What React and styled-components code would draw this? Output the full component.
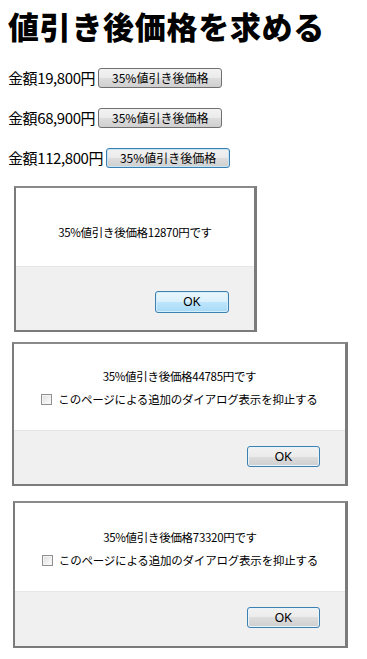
import React from 'react';
import styled, { createGlobalStyle, css } from 'styled-components';

const GlobalStyle = createGlobalStyle`
  html, body {
    margin: 0;
    padding: 0;
    background: #fff;
  }
  body {
    font-family: "Noto Sans CJK JP", "Noto Sans", sans-serif;
    color: #000;
  }
`;

const Page = styled.div`
  width: 367px;
  height: 659px;
  overflow: hidden;
  display: flex;
  flex-direction: column;
`;

const Title = styled.h1`
  margin: 8px 0 0 8px;
  font-family: "Noto Sans CJK JP", sans-serif;
  font-size: 31px;
  font-weight: 900;
  line-height: 36px;
  letter-spacing: 0.7px;
  height: 36px;
`;

const Rows = styled.div`
  display: flex;
  flex-direction: column;
  gap: 20px;
  margin: 24px 0 0 8px;
`;

const Row = styled.div`
  display: flex;
  align-items: center;
  height: 20px;
`;

const Amount = styled.span`
  font-size: 15px;
  letter-spacing: -0.4px;
  line-height: 20px;
  margin-right: 3px;
`;

const PageButton = styled.button`
  height: 20px;
  width: 124px;
  padding: 0;
  font-family: "Noto Sans CJK JP", sans-serif;
  font-size: 12px;
  line-height: 18px;
  color: #000;
  border: 1px solid #707070;
  border-radius: 3px;
  background: linear-gradient(#f2f2f2 0%, #ebebeb 50%, #dddddd 50%, #cfcfcf 100%);
  ${(p) => p.$focused && css`
    border-color: #3c7fb1;
    box-shadow: inset 0 0 0 1px #c4e5f6;
  `}
`;

const DialogList = styled.div`
  display: flex;
  flex-direction: column;
  margin-top: 18px;
`;

const Dialog = styled.div`
  box-sizing: border-box;
  width: ${(p) => p.$width}px;
  margin: ${(p) => p.$top}px 0 0 ${(p) => p.$left}px;
  border: 2px solid #7b7b7b;
  border-right-width: 3px;
  border-top-color: #8a8a8a;
  display: flex;
  flex-direction: column;
  background: #fff;
  font-family: "Noto Sans CJK JP", sans-serif;
`;

const Body = styled.div`
  height: ${(p) => p.$height}px;
  box-sizing: border-box;
  padding-top: ${(p) => p.$padTop}px;
  display: flex;
  flex-direction: column;
  align-items: center;
  gap: 9px;
  border-bottom: 1px solid #e6e6e6;
`;

const Message = styled.div`
  font-size: 11.5px;
  line-height: 14px;
  letter-spacing: -0.3px;
  color: #000;
`;

const CheckRow = styled.label`
  display: flex;
  align-items: center;
  gap: 6px;
  font-size: 11.5px;
  line-height: 14px;
  letter-spacing: -0.2px;
`;

const Box = styled.span`
  box-sizing: border-box;
  width: 11px;
  height: 11px;
  border: 1px solid #8e8f8f;
  background: linear-gradient(135deg, #dcdcdc 0%, #f4f4f4 70%, #fdfdfd 100%);
  box-shadow: inset 0 0 0 1px #f4f4f4;
`;

const Footer = styled.div`
  background: #f0f0f0;
  display: flex;
  justify-content: flex-end;
  padding: ${(p) => p.$padTop}px 25px ${(p) => p.$padBottom}px 0;
`;

const OkButton = styled.button`
  box-sizing: border-box;
  width: ${(p) => p.$w}px;
  height: ${(p) => p.$h}px;
  padding: 0;
  font-family: "Liberation Sans", sans-serif;
  font-size: 12px;
  color: #000;
  border: 1px solid #3c7fb1;
  border-radius: 3px;
  background: ${(p) => (p.$hover
    ? 'linear-gradient(#eaf6fd 0%, #d9f0fc 50%, #bee6fd 50%, #a7d9f5 100%)'
    : 'linear-gradient(#f2f2f2 0%, #ebebeb 50%, #dddddd 50%, #cfcfcf 100%)')};
  box-shadow: inset 0 0 0 1px ${(p) => (p.$hover ? '#d5eefb' : '#e9f4fa')};
`;

const rows = [
  { amount: '金額19,800円', focused: false },
  { amount: '金額68,900円', focused: false },
  { amount: '金額112,800円', focused: true },
];

const dialogs = [
  { price: 12870, left: 14, top: 0, width: 243, bodyH: 79, padTop: 37, check: false, footTop: 24, footBot: 17, hover: true, okW: 74, okH: 22 },
  { price: 44785, left: 12, top: 10, width: 336, bodyH: 87, padTop: 25, check: true, footTop: 15, footBot: 17, hover: false, okW: 73, okH: 21 },
  { price: 73320, left: 13, top: 15, width: 335, bodyH: 89, padTop: 27, check: true, footTop: 15, footBot: 18, hover: false, okW: 73, okH: 21 },
];

function App() {
  return (
    <Page>
      <GlobalStyle />
      <Title>値引き後価格を求める</Title>
      <Rows>
        {rows.map((r) => (
          <Row key={r.amount}>
            <Amount>{r.amount}</Amount>
            <PageButton $focused={r.focused}>35%値引き後価格</PageButton>
          </Row>
        ))}
      </Rows>
      <DialogList>
        {dialogs.map((d) => (
          <Dialog key={d.price} $left={d.left} $top={d.top} $width={d.width}>
            <Body $height={d.bodyH} $padTop={d.padTop}>
              <Message>{`35%値引き後価格${d.price}円です`}</Message>
              {d.check ? (
                <CheckRow>
                  <Box />
                  このページによる追加のダイアログ表示を抑止する
                </CheckRow>
              ) : null}
            </Body>
            <Footer $padTop={d.footTop} $padBottom={d.footBot}>
              <OkButton $hover={d.hover} $w={d.okW} $h={d.okH}>OK</OkButton>
            </Footer>
          </Dialog>
        ))}
      </DialogList>
    </Page>
  );
}

export default App;
